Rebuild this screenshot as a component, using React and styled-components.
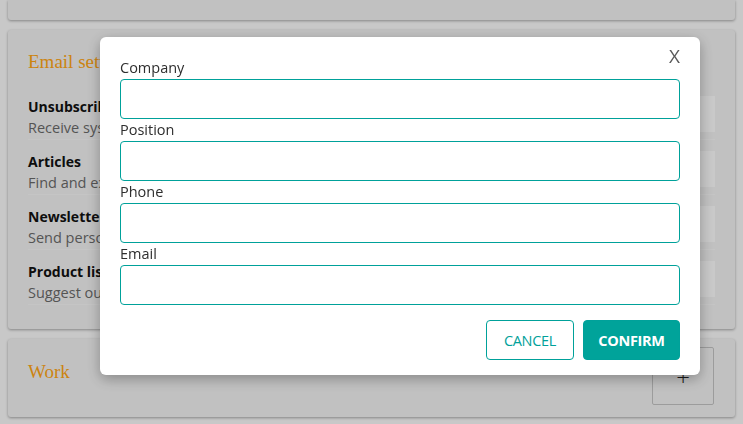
import React from 'react';
import styled, { createGlobalStyle } from 'styled-components';

const GlobalStyle = createGlobalStyle`
  html, body {
    margin: 0;
    padding: 0;
    background: #fbfbfb;
    font-family: 'Open Sans', 'Noto Sans', sans-serif;
    overflow: hidden;
  }
  * { box-sizing: border-box; }
`;

const Page = styled.div`
  display: flex;
  flex-direction: column;
  gap: 10px;
  padding: 0 8px;
  height: 424px;
`;

const Card = styled.section`
  background: #f2f2f2;
  border-radius: ${(p) => (p.$top ? '0 0 3px 3px' : '3px')};
  box-shadow: 0 1px 3px rgba(0, 0, 0, 0.35);
  height: ${(p) => p.$height}px;
  padding: ${(p) => p.$pad || '0'};
`;

const CardTitle = styled.h2`
  margin: 0;
  font-family: 'Liberation Serif', 'Times New Roman', serif;
  font-weight: 400;
  font-size: 19px;
  line-height: 24px;
  color: #ffa514;
`;

const SettingList = styled.div`
  display: flex;
  flex-direction: column;
  gap: 11px;
  margin-top: 22px;
`;

const SettingRow = styled.div`
  display: flex;
  justify-content: space-between;
  align-items: flex-start;
  border-bottom: 1px solid #f7f7f7;
  height: 44px;
`;

const SettingText = styled.div`
  display: flex;
  flex-direction: column;
`;

const SettingName = styled.div`
  font-size: 14px;
  font-weight: 700;
  line-height: 21px;
  color: #111;
`;

const SettingDesc = styled.div`
  font-size: 14.5px;
  line-height: 21px;
  color: #6a6a6a;
`;

const SettingControl = styled.div`
  width: 60px;
  height: 36px;
  background: #fcfcfc;
`;

const WorkRow = styled.div`
  display: flex;
  justify-content: space-between;
  align-items: flex-start;
`;

const WorkTitle = styled(CardTitle)`
  margin-top: 13px;
`;

const AddButton = styled.button`
  width: 62px;
  height: 58px;
  border: 1px solid #c4c4c4;
  border-radius: 2px;
  background: transparent;
  font-family: 'Open Sans', sans-serif;
  font-size: 24px;
  font-weight: 300;
  color: #222;
`;

const Overlay = styled.div`
  position: fixed;
  inset: 0;
  background: rgba(0, 0, 0, 0.2);
  display: flex;
  justify-content: flex-start;
  align-items: flex-start;
  padding: 37px 0 0 100px;
`;

const Modal = styled.div`
  position: relative;
  width: 600px;
  background: #fff;
  border-radius: 6px;
  box-shadow: 0 4px 14px rgba(0, 0, 0, 0.3);
  padding: 20px 20px 15px;
  display: flex;
  flex-direction: column;
`;

const CloseButton = styled.button`
  position: absolute;
  top: 8px;
  right: 20px;
  border: none;
  background: none;
  padding: 0;
  font-family: 'Open Sans', sans-serif;
  font-size: 19px;
  line-height: 22px;
  color: #5a5a5a;
  cursor: pointer;
`;

const Field = styled.label`
  display: flex;
  flex-direction: column;
`;

const Label = styled.span`
  font-size: 14.5px;
  line-height: 22px;
  color: #2e2e2e;
`;

const Input = styled.input`
  height: 40px;
  border: 1px solid #00a19a;
  border-radius: 4px;
  outline: none;
  padding: 0 10px;
  font: inherit;
`;

const Actions = styled.div`
  display: flex;
  justify-content: flex-end;
  gap: 9px;
  margin-top: 15px;
`;

const ActionButton = styled.button`
  height: 40px;
  padding: 0;
  border-radius: 4px;
  border: 1px solid #00a19a;
  background: ${(p) => (p.$primary ? '#00a39a' : '#fff')};
  color: ${(p) => (p.$primary ? '#fff' : '#00a19a')};
  font-family: 'Open Sans', sans-serif;
  font-size: 14.5px;
  font-weight: ${(p) => (p.$primary ? 700 : 400)};
  letter-spacing: -0.3px;
  width: ${(p) => p.$width}px;
`;

const settings = [
  { name: 'Unsubscribe', desc: 'Receive system emails' },
  { name: 'Articles', desc: 'Find and explore articles' },
  { name: 'Newsletter', desc: 'Send personal newsletter' },
  { name: 'Product list', desc: 'Suggest our products' },
];

const fields = ['Company', 'Position', 'Phone', 'Email'];

export default function App() {
  return (
    <>
      <GlobalStyle />
      <Page>
        <Card $top $height={20} />
        <Card $height={299} $pad="20px 20px 0">
          <CardTitle>Email settings</CardTitle>
          <SettingList>
            {settings.map((s) => (
              <SettingRow key={s.name}>
                <SettingText>
                  <SettingName>{s.name}</SettingName>
                  <SettingDesc>{s.desc}</SettingDesc>
                </SettingText>
                <SettingControl />
              </SettingRow>
            ))}
          </SettingList>
        </Card>
        <Card $height={78} $pad="8px 21px 0 20px">
          <WorkRow>
            <WorkTitle>Work</WorkTitle>
            <AddButton>+</AddButton>
          </WorkRow>
        </Card>
      </Page>
      <Overlay>
        <Modal>
          <CloseButton>X</CloseButton>
          {fields.map((f) => (
            <Field key={f}>
              <Label>{f}</Label>
              <Input />
            </Field>
          ))}
          <Actions>
            <ActionButton $width={88}>CANCEL</ActionButton>
            <ActionButton $primary $width={97}>CONFIRM</ActionButton>
          </Actions>
        </Modal>
      </Overlay>
    </>
  );
}
